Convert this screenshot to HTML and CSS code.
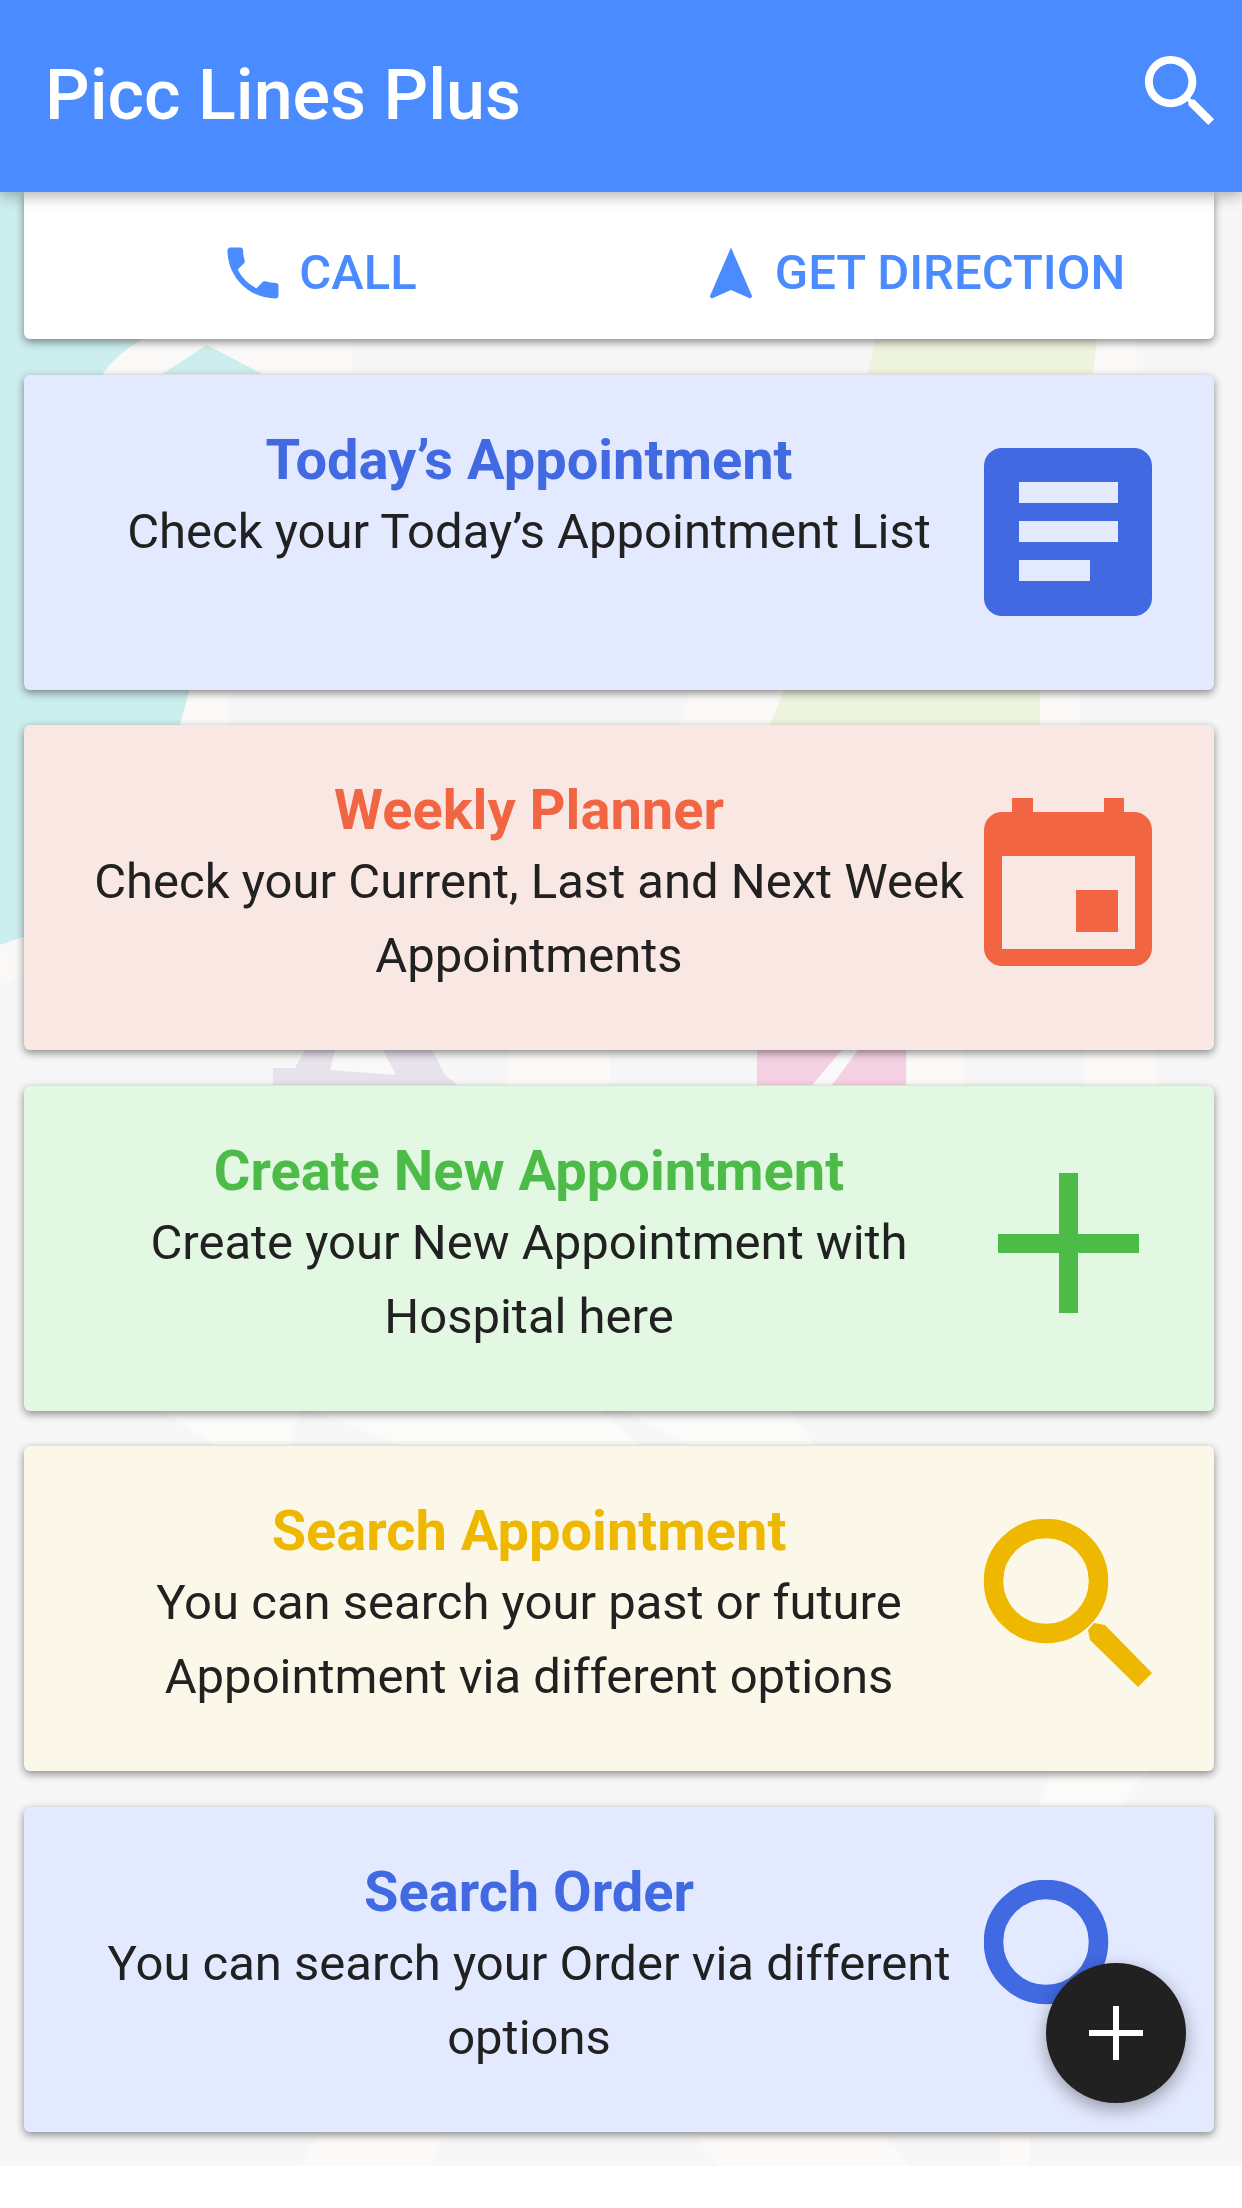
FILE: index.html
```html
<!DOCTYPE html>
<html>
<head>
	<meta charset="utf-8">
	<title>Picc Lines Plus</title>
	<link rel="stylesheet" href="styles.css">
</head>
<body>

<div class="screen">

	<!-- faded map behind the cards -->
	<svg class="map" width="1242" height="2166" viewBox="0 0 1242 2166">
		<rect width="1242" height="2166" fill="#f7f7f7"/>
		<path d="M0 192H143V339Q115 355 103 374L190 689L180 725Q150 880 24 937L0 945Z" fill="#cdeeee"/>
		<path d="M0 945L24 937V975L0 985Z" fill="#faf9f8"/>
		<path d="M103 374Q115 355 143 339H352V374H262L207 345L162 374Z" fill="#faf9f7"/>
		<path d="M162 374L207 345L262 374Z" fill="#cdeeee"/>
		<path d="M875 339H1097L1093 374H868Z" fill="#eef3dd"/>
		<path d="M1097 339H1137V374H1093Z" fill="#fbfaf8"/>
		<path d="M190 689H230L228 725H180Z" fill="#fbfaf8"/>
		<path d="M690 689H785L770 725H680Z" fill="#fbfaf8"/>
		<path d="M785 689H1040V725H770Z" fill="#eef3dd"/>
		<path d="M1040 689H1080V725H1040Z" fill="#fbfaf8"/>
		<path d="M305 1050H432L445 1075L458 1085H273V1068H295Z" fill="#e8e2ec"/>
		<path d="M335 1050H383L396 1075L330 1070Z" fill="#faf9f9"/>
		<path d="M507 1050H610V1085H507Z" fill="#fbfaf9"/>
		<path d="M757 1050H906V1085H757Z" fill="#f5d1e3"/>
		<path d="M842 1050H858L832 1085H812Z" fill="#fafafa"/>
		<path d="M907 1050H963V1085H907Z" fill="#fbfaf9"/>
		<path d="M1085 1050H1157V1085H1085Z" fill="#fbfaf9"/>
		<path d="M160 1410H300L290 1445H215Z" fill="#fbfbfa"/>
		<path d="M310 1410H600L640 1445H400Z" fill="#fbfbfa"/>
		<path d="M620 1410H790L815 1445H690Z" fill="#fbfbfa"/>
		<path d="M1050 1770H1150L1120 1806H1040Z" fill="#fbfbfa"/>
		<path d="M320 2131H445L430 2166H300Z" fill="#fbfaf8"/>
		<path d="M690 2131H880L910 2166H720Z" fill="#fbfaf8"/>
		<path d="M1000 2131H1030V2166H1000Z" fill="#fbfaf8"/>
	</svg>

	<div class="content">

		<div class="actions">
			<div class="action action-call">
				<svg class="action-icon" viewBox="0 0 24 24"><path d="M6.620 10.790c1.440 2.830 3.760 5.140 6.590 6.590l2.200-2.200c.27-.27.67-.36 1.020-.24 1.120.37 2.330.57 3.570.57.55 0 1 .45 1 1V20c0 .55-.45 1-1 1-9.390 0-17-7.610-17-17 0-.55.45-1 1-1h3.500c.55 0 1 .45 1 1 0 1.250.2 2.450.57 3.570.11.35.03.74-.25 1.020l-2.200 2.200z"/></svg>
				<span>CALL</span>
			</div>
			<div class="action action-direction">
				<svg class="action-icon" viewBox="0 0 24 24"><path d="M12 3L4.500 20.300l.7.7L12 18l6.800 3 .7-.7z"/></svg>
				<span>GET DIRECTION</span>
			</div>
		</div>

		<div class="card card-short blue">
			<div class="card-text">
				<div class="card-title">Today’s Appointment</div>
				<div class="card-desc">Check your Today’s Appointment List</div>
			</div>
			<svg class="card-icon" viewBox="0 0 168 168"><path d="M18 0H150a18 18 0 0 1 18 18V150a18 18 0 0 1-18 18H18a18 18 0 0 1-18-18V18A18 18 0 0 1 18 0z"/><path class="cut" d="M35 34H134V55H35zM35 73H134V94H35zM35 112H106V133H35z"/></svg>
		</div>

		<div class="card red">
			<div class="card-text">
				<div class="card-title">Weekly Planner</div>
				<div class="card-desc">Check your Current, Last and Next Week Appointments</div>
			</div>
			<svg class="card-icon" viewBox="0 0 168 168"><path d="M28 0H49V14H120V0H140V14H150a18 18 0 0 1 18 18V150a18 18 0 0 1-18 18H18a18 18 0 0 1-18-18V32a18 18 0 0 1 18-18H28z"/><path class="cut" d="M18 58H151V151H18z"/><path d="M92 92H134V134H92z"/></svg>
		</div>

		<div class="card green">
			<div class="card-text">
				<div class="card-title">Create New Appointment</div>
				<div class="card-desc">Create your New Appointment with Hospital here</div>
			</div>
			<svg class="card-icon" viewBox="0 0 168 168"><path d="M75 14H94V75H155V94H94V154H75V94H14V75H75z"/></svg>
		</div>

		<div class="card yellow">
			<div class="card-text">
				<div class="card-title">Search Appointment</div>
				<div class="card-desc">You can search your past or future Appointment via different options</div>
			</div>
			<svg class="card-icon" viewBox="0 0 168 168"><circle cx="62" cy="62" r="52.500" class="ring"/><path d="M110 104L121 106L168 154L154 168L106 121L104 111z"/></svg>
		</div>

		<div class="card blue">
			<div class="card-text">
				<div class="card-title">Search Order</div>
				<div class="card-desc">You can search your Order via different options</div>
			</div>
			<svg class="card-icon" viewBox="0 0 168 168"><circle cx="62" cy="62" r="52.500" class="ring"/><path d="M110 104L121 106L168 154L154 168L106 121L104 111z"/></svg>
		</div>

	</div>

	<div class="appbar">
		<div class="appbar-title">Picc Lines Plus</div>
		<svg class="appbar-search" viewBox="0 0 24 24"><path d="M15.500 14h-.79l-.28-.27A6.470 6.470 0 0 0 16 9.500 6.500 6.500 0 1 0 9.500 16c1.610 0 3.090-.59 4.230-1.570l.27.28v.79l5 4.990L20.490 19l-4.990-5zm-6 0C7.010 14 5 11.990 5 9.500S7.010 5 9.500 5 14 7.010 14 9.500 11.990 14 9.500 14z"/></svg>
	</div>

	<div class="fab">
		<svg viewBox="0 0 54 54" width="54" height="54"><path d="M24 0H30V24H54V30H30V54H24V30H0V24H24z"/></svg>
	</div>

</div>

</body>
</html>
```

FILE: styles.css
```css
html, body {
    margin: 0;
    padding: 0;
    background-color: #fff;
}
body {
    font-family: Roboto, "Liberation Sans", sans-serif;
}
.screen {
    position: relative;
    width: 1242px;
    height: 2208px;
    overflow: hidden;
}
.map {
    position: absolute;
    top: 0;
    left: 0;
}
.content {
    position: relative;
    display: flex;
    flex-direction: column;
    gap: 35.5px;
    padding: 192px 28px 0 24px;
}

/* app bar */
.appbar {
    position: absolute;
    top: 0;
    left: 0;
    width: 1242px;
    height: 192px;
    box-sizing: border-box;
    padding: 0 14px 0 45px;
    display: flex;
    align-items: center;
    justify-content: space-between;
    background-color: #4a8bff;
    color: #fff;
    box-shadow: 0 4px 14px rgba(0, 0, 0, 0.3);
}
.appbar-title {
    margin-bottom: 2px;
    font-size: 70px;
    font-weight: 500;
}
.appbar-search {
    width: 95px;
    height: 95px;
    margin-bottom: 10px;
    fill: #fff;
}

/* call / direction row */
.actions {
    display: flex;
    height: 147px;
    background-color: #fff;
    border-radius: 0 0 6px 6px;
    box-shadow: 0 3px 8px rgba(0, 0, 0, 0.45);
}
.action {
    flex: 1;
    box-sizing: border-box;
    padding-top: 14px;
    display: flex;
    align-items: center;
    justify-content: center;
    gap: 12px;
    font-size: 49px;
    font-weight: 500;
    color: #4a8bff;
}
.action-call {
    padding-right: 5px;
}
.action-direction {
    padding-right: 9px;
    gap: 10px;
}
.action-icon {
    width: 68px;
    height: 68px;
    fill: #4a8bff;
}

/* menu cards */
.card {
    display: flex;
    align-items: flex-start;
    height: 325px;
    box-sizing: border-box;
    padding: 0 62px 0 60px;
    border-radius: 6px;
    box-shadow: 0 3px 8px rgba(0, 0, 0, 0.45);
}
.card-short {
    height: 315px;
}
.card-text {
    flex: 1;
    padding-top: 58px;
    text-align: center;
}
.card-title {
    font-size: 56px;
    font-weight: 700;
    line-height: 54px;
}
.card-desc {
    margin-top: 8px;
    font-size: 49px;
    line-height: 74px;
    color: #212121;
}
.card-icon {
    flex: none;
    width: 168px;
    height: 168px;
    margin: 73px 0 0 10px;
}
.ring {
    fill: none;
    stroke-width: 19.5px;
}
.blue { background-color: #e3e9fe; }
.blue .card-title { color: #4169e1; }
.blue .card-icon { fill: #4169e1; }
.blue .cut { fill: #e3e9fe; }
.blue .ring { stroke: #4169e1; }
.red { background-color: #f9e7e3; }
.red .card-title { color: #f26543; }
.red .card-icon { fill: #f26543; }
.red .cut { fill: #f9e7e3; }
.green { background-color: #e2f8e2; }
.green .card-title { color: #4cbb47; }
.green .card-icon { fill: #4cbb47; }
.yellow { background-color: #fbf8ea; }
.yellow .card-title { color: #efb800; }
.yellow .card-icon { fill: #efb800; }
.yellow .ring { stroke: #efb800; }

/* floating button */
.fab {
    position: absolute;
    top: 1963px;
    left: 1046px;
    width: 140px;
    height: 140px;
    display: flex;
    align-items: center;
    justify-content: center;
    border-radius: 50%;
    background-color: #212121;
    box-shadow: 0 6px 18px rgba(0, 0, 0, 0.35);
}
.fab svg {
    fill: #fff;
}
```
